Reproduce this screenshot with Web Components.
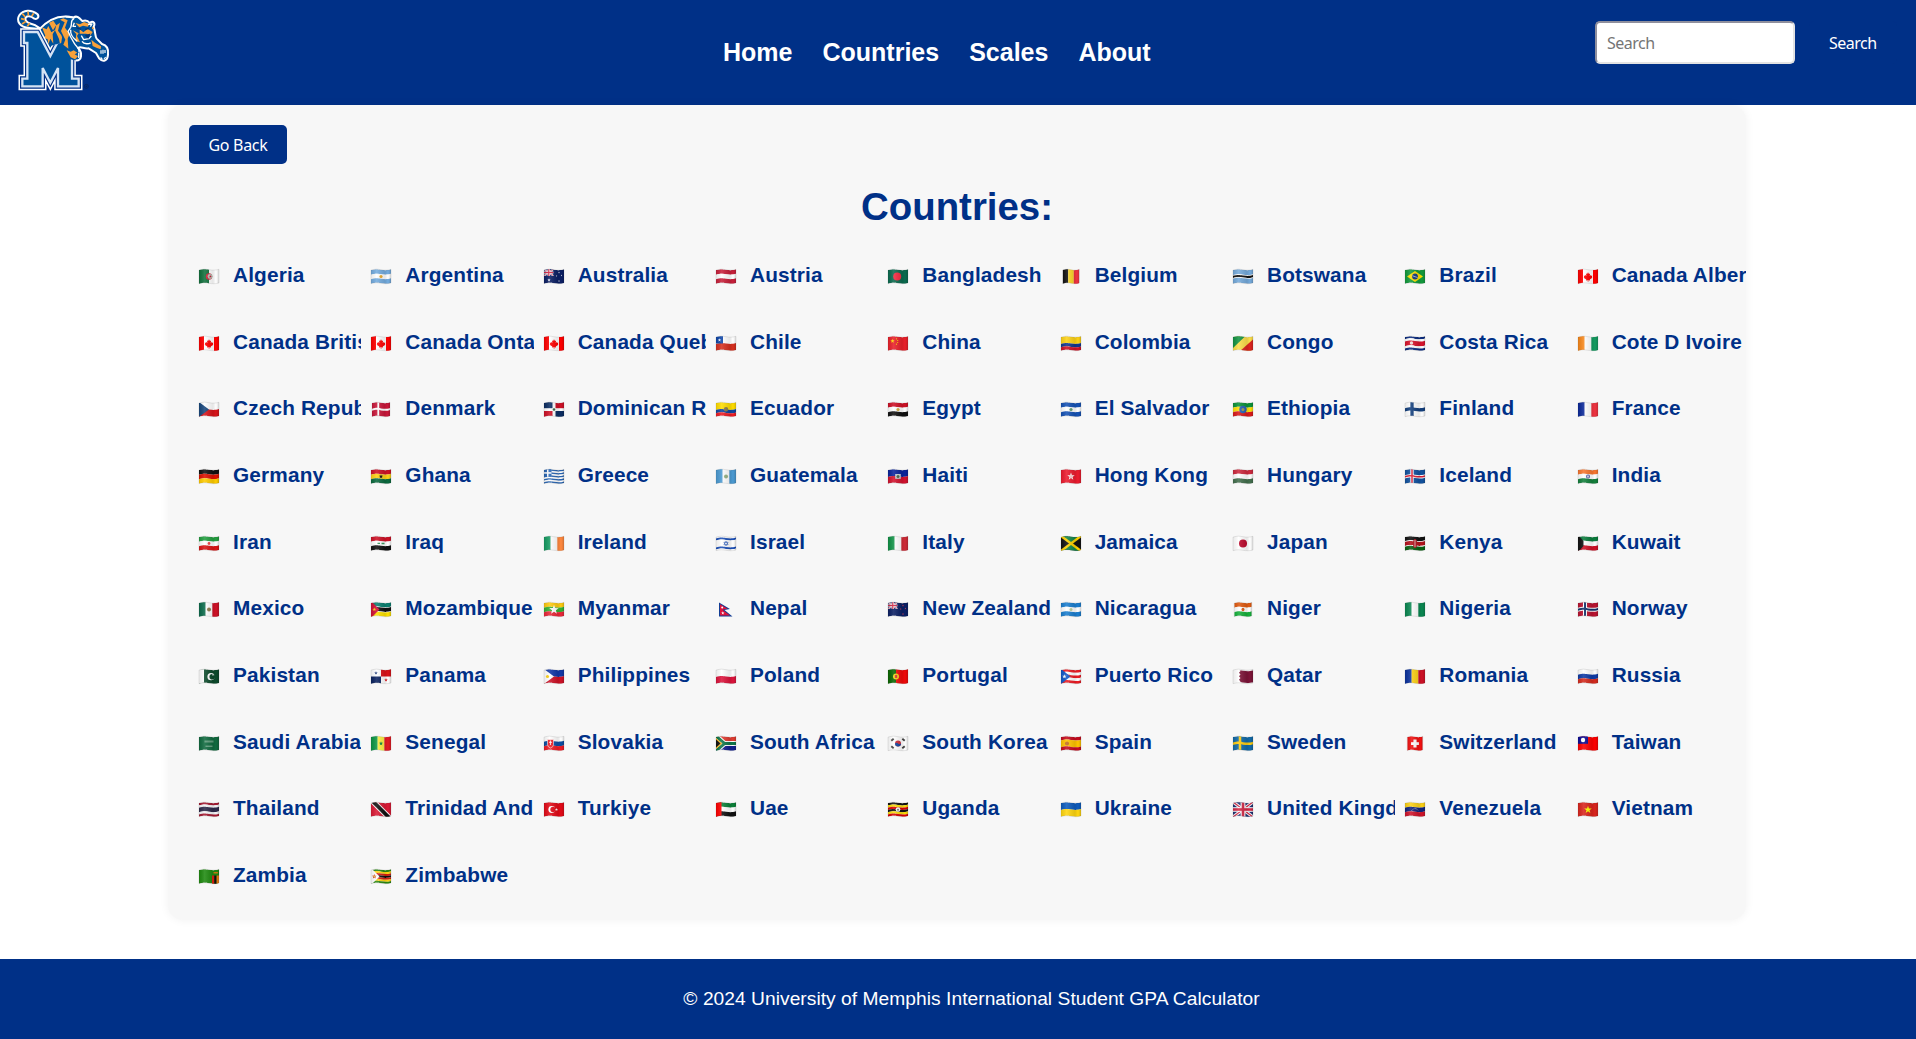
<!DOCTYPE html>
<html lang="en">
<head>
<meta charset="utf-8">
<title>Countries</title>
<style>
html, body { margin: 0; background: #fff; font-family: "Liberation Sans", Arial, sans-serif; }
</style>
</head>
<body>
<gpa-page></gpa-page>
<script>
const define = (name, html, init) => customElements.define(name, class extends HTMLElement {
  constructor() {
    super();
    this.attachShadow({ mode: 'open' }).innerHTML = html;
  }
  connectedCallback() { if (init) init.call(this, this.shadowRoot); }
});

/* ---------- flags: 20 x 15 drawings with a waving edge ---------- */
const band = (a, b, c) => `<path fill="${c}" d="M0 ${a + .4}C5 ${a - 1} 6 ${a - .6} 10 ${a}S16 ${a + .7} 20 ${a - .4}V${b - .4}C16 ${b + .7} 14 ${b + .6} 10 ${b}C6 ${b - .6} 5 ${b - 1} 0 ${b + .4}Z"/>`;
const T = .7, B = 14.3;
const H = (...cs) => {
  const ws = cs.map(c => Array.isArray(c) ? c[1] : 1), sum = ws.reduce((x, y) => x + y, 0);
  let y = T, out = '';
  cs.forEach((c, i) => { const n = y + (B - T) * ws[i] / sum; out += band(y, n, Array.isArray(c) ? c[0] : c); y = n; });
  return out;
};
const R = (x, y, w, h, c) => `<rect x="${x}" y="${y}" width="${w}" height="${h}" fill="${c}"/>`;
const V = (...cs) => {
  const ws = cs.map(c => Array.isArray(c) ? c[1] : 1), sum = ws.reduce((x, y) => x + y, 0);
  let x = 0, out = '';
  cs.forEach((c, i) => { const w = 20 * ws[i] / sum; out += R(x, -1, w + .02, 17, Array.isArray(c) ? c[0] : c); x += w; });
  return out;
};
const C = (x, y, r, c) => `<circle cx="${x}" cy="${y}" r="${r}" fill="${c}"/>`;
const P = (pts, c) => `<polygon points="${pts}" fill="${c}"/>`;
const L = (x1, y1, x2, y2, w, c) => `<line x1="${x1}" y1="${y1}" x2="${x2}" y2="${y2}" stroke="${c}" stroke-width="${w}"/>`;
const S = (x, y, r, c) => {
  let p = [];
  for (let i = 0; i < 10; i++) { const a = Math.PI * i / 5, q = i % 2 ? r * .4 : r; p.push((x + q * Math.sin(a)).toFixed(2) + ',' + (y - q * Math.cos(a)).toFixed(2)); }
  return P(p.join(' '), c);
};
const moon = (x, y, r, c, bg) => C(x, y, r, c) + C(x + r * .35, y, r * .78, bg);
const cross = (bg, c, w, c2, w2) => band(T, B, bg) + R(7 - w / 2, -1, w, 17, c) + band(7.4 - w / 2, 7.4 + w / 2, c) + (c2 ? R(7 - w2 / 2, -1, w2, 17, c2) + band(7.4 - w2 / 2, 7.4 + w2 / 2, c2) : '');
const jack = (w, h) => `<svg width="${w}" height="${h}" viewBox="0 0 20 15" preserveAspectRatio="none"><rect width="20" height="15" fill="#1b2f70"/>` +
  L(0, 0, 20, 15, 3.2, '#fff') + L(20, 0, 0, 15, 3.2, '#fff') + L(0, 0, 20, 15, 1.3, '#d22846') + L(20, 0, 0, 15, 1.3, '#d22846') +
  R(7.6, 0, 4.8, 15, '#fff') + R(0, 5.2, 20, 4.6, '#fff') + R(8.7, 0, 2.6, 15, '#d22846') + R(0, 6.2, 20, 2.6, '#d22846') + '</svg>';
const leaf = '<path fill="#f00" d="M10 3.2l1 1.8 1.1-.5-.4 2.4 1.2-1 .3.9 1.2-.1-.6 1.5.6.5-2.6 1.8.3 1-1.8-.2V13h-.5v-1.7l-1.8.2.3-1L5.6 8.700l.7-.5-.6-1.5 1.200.1.3-.9 1.200 1L8 4.500l1.100.5z"/>';
const canada = V(['#f00', 1], ['#fff', 2], ['#f00', 1]) + leaf;

const FLAGS = {
  dz: V('#11703c', '#fff') + moon(10, 7.5, 3.2, '#d2213a', '#b4c3b5') + S(11.4, 7.5, 1.4, '#d21034'),
  ar: H('#74acdf', '#fff', '#74acdf') + C(10, 7.5, 1.6, '#e6a82a'),
  au: band(T, B, '#0b1f64') + jack(9.6, 7) + S(5, 11, 1.7, '#fff') + S(15, 3.5, 1, '#fff') + S(15, 12, 1, '#fff') + S(12.6, 7, .9, '#fff') + S(17.5, 6.5, .9, '#fff'),
  at: H('#c8203a', '#fff', '#c8203a'),
  bd: band(T, B, '#0a6a4e') + C(9.2, 7.5, 4, '#f42a41'),
  be: V('#111', '#fbd526', '#ef3340'),
  bw: H(['#75aadb', 4], ['#fff', .6], ['#111', 1.7], ['#fff', .6], ['#75aadb', 4]),
  br: band(T, B, '#129a3c') + P('10,2 18,7.500 10,13 2,7.500', '#fedf00') + C(10, 7.5, 2.900, '#123a7c') + L(7.500, 6.800, 12.500, 8.500, .6, '#fff'),
  ca: canada,
  cl: H('#fff', '#d6301f') + R(0, -1, 7, 8.500, '#0e46a8') + S(3.500, 4, 1.8, '#fff'),
  cn: band(T, B, '#e9202a') + S(4.5, 5, 2.3, '#ffd400') + C(8.500, 2.800, .6, '#ffd400') + C(9.700, 4.500, .6, '#ffd400') + C(9.700, 6.500, .6, '#ffd400') + C(8.500, 8.200, .6, '#ffd400'),
  co: H(['#fcd116', 2], '#10378f', '#ce1126'),
  cg: band(T, B, '#fbde4a') + P('0,-1 13.500,-1 0,12', '#149443') + P('20,3.500 20,16 6,16', '#dc241f'),
  cr: H(['#0a2b7f', 1], ['#fff', 1], ['#d8142c', 2.2], ['#fff', 1], ['#0a2b7f', 1]) + C(6.500, 7, 1.7, '#f2d8d2'),
  ci: V('#f7871a', '#fff', '#149b60'),
  cz: H('#fff', '#d7141a') + P('0,0 10,7.500 0,15', '#18477d'),
  dk: cross('#c9173a', '#fff', 2),
  do: band(T, B, '#fff') + R(0, -1, 8.500, 7.200, '#0b2d62') + R(11.500, -1, 9, 7.200, '#ce1126') + R(0, 9, 8.500, 7, '#ce1126') + R(11.500, 9, 9, 7, '#0b2d62') + C(10, 7.500, 1.300, '#356544'),
  ec: H(['#fd0', 2], '#1045a0', '#ed1c24') + C(10, 7.200, 2.200, '#8a7a45'),
  eg: H('#ce1126', '#fff', '#111') + C(10, 7.500, 1.600, '#d1aa3f'),
  sv: H('#1552b5', '#fff', '#1552b5') + C(10, 7.500, 1.600, '#5c9b72'),
  et: H('#0b9339', '#fcdd09', '#da1a1b') + C(10, 7.500, 3.700, '#2461b5') + C(10, 7.500, 1.500, '#9a9a52'),
  fi: cross('#fff', '#133f7d', 3.300),
  fr: V('#0a2899', '#fff', '#ef3340'),
  de: H('#111', '#dd1200', '#fc0'),
  gh: H('#ce1126', '#fcd116', '#0b6b3f') + S(10, 7.500, 2.300, '#111'),
  gr: H('#2966b4', '#fff', '#2966b4', '#fff', '#2966b4', '#fff', '#2966b4', '#fff', '#2966b4') + R(0, -1, 7.500, 8.800, '#2966b4') + R(3, -1, 1.500, 8.800, '#fff') + R(0, 3.200, 7.500, 1.500, '#fff'),
  gt: V('#4b9ad2', '#fff', '#4b9ad2') + C(10, 7.500, 2, '#94b183'),
  ht: H('#0a249c', '#d2122e') + R(7.200, 5, 5.600, 4.800, '#c8cfd4') + C(10, 7.500, 1.500, '#49624b'),
  hk: band(T, B, '#ec1b2e') + S(10, 7.500, 3.900, '#fff') + C(10, 7.500, 1.500, '#f9c5c9'),
  hu: H('#cd2a3e', '#fff', '#436f4d'),
  is: cross('#12529f', '#fff', 3.300, '#dc1e35', 1.500),
  in: H('#f8772f', '#fff', '#13803c') + C(10, 7.500, 1.900, '#3a3f95') + C(10, 7.500, 1.200, '#c9cae6'),
  ir: H('#239f40', '#fff', '#da1414') + C(10, 7.500, 1.400, '#e44'),
  iq: H('#ce1126', '#fff', '#111') + L(6.500, 7.300, 9, 7.300, 1.300, '#3c9960') + L(10.500, 7.500, 13.500, 7.500, 1.300, '#3c9960'),
  ie: V('#169b62', '#fff', '#ff883e'),
  il: H(['#fff', 1.1], ['#1c50b8', 1.700], ['#fff', 6], ['#1c50b8', 1.700], ['#fff', 1.100]) + '<path d="M10 5.200l2.100 3.500H7.900zM10 9.800L7.900 6.300h4.200z" fill="none" stroke="#2458bb" stroke-width=".6"/>',
  it: V('#109246', '#fff', '#ce2b37'),
  jm: band(T, B, '#111') + P('0,-1 20,-1 10,7.500', '#12874a') + P('0,16 20,16 10,7.500', '#12874a') + L(0, 0, 20, 15, 2.400, '#fed100') + L(20, 0, 0, 15, 2.400, '#fed100'),
  jp: band(T, B, '#fff') + C(10, 7.500, 4, '#bc0a2d'),
  ke: H(['#111', 3], ['#fff', .6], ['#b5121c', 3], ['#fff', .6], ['#0a6013', 3]) + '<ellipse cx="10" cy="7.500" rx="2" ry="4.500" fill="#b5121c"/><path d="M10 4v7" stroke="#eee" stroke-width=".7"/>',
  kw: H('#0a7d3d', '#fff', '#ce1126') + P('0,-1 5.500,5 5.500,10 0,16', '#111'),
  mx: V('#0b6b4b', '#fff', '#ce1126') + C(10, 7.500, 2, '#8f7b4b'),
  mz: H(['#0a8070', 4], ['#fff', .5], ['#111', 3.700], ['#fff', .5], ['#fce100', 4]) + P('0,-1 8.500,7.500 0,16', '#d21034') + S(3.300, 7.500, 2, '#fcd116'),
  mm: H('#fecb10', '#34b233', '#ea2839') + S(10, 7.700, 5, '#fff'),
  np: P('3,.5 14,7 8.500,8 16.500,14.500 3,14.500', '#123d94') + P('4,2.200 11.500,6.800 6.500,7.800 14,13.500 4,13.500', '#dc143c') + C(6.200, 5.500, 1, '#fff') + S(6.800, 11, 1.700, '#fff'),
  nz: band(T, B, '#0b1f64') + jack(9.600, 7) + S(15, 3.500, 1.100, '#d2415a') + S(15, 12, 1.100, '#d2415a') + S(12.700, 7, 1, '#d2415a') + S(17.400, 6.500, 1, '#d2415a'),
  ni: H('#1b7fd0', '#fff', '#1b7fd0') + C(10, 7.500, 1.500, '#b9cf9b'),
  ne: H('#e05a10', '#fff', '#16b03b') + C(10, 7.500, 1.700, '#e05a10'),
  ng: V('#0a8751', '#fff', '#0a8751'),
  no: cross('#ba1330', '#fff', 4, '#123069', 2),
  pk: band(T, B, '#0c4a2b') + R(0, -1, 5, 17, '#fff') + moon(12, 7.700, 3.600, '#fff', '#0c4a2b') + S(14, 5.700, 1.300, '#fff'),
  pa: band(T, B, '#fff') + R(10, -1, 10, 8.500, '#da121a') + R(0, 7.500, 10, 9, '#0b2360') + S(5, 4, 1.900, '#1b3776') + S(15, 11, 1.900, '#da121a'),
  ph: H('#1238a8', '#ce1126') + P('0,0 10,7.500 0,15', '#fff') + C(3.500, 7.500, 1.600, '#fcd116'),
  pl: H('#fff', '#dc143c'),
  pt: V(['#0a6600', 2], ['#f00a0a', 3]) + C(8, 7.500, 3, '#f2d013') + R(6.900, 6, 2.300, 3, '#d43a34'),
  pr: H('#ed1c24', '#fff', '#ed1c24', '#fff', '#ed1c24') + P('0,0 9.500,7.500 0,15', '#1058c8') + S(3.400, 7.500, 2.300, '#fff'),
  qa: `<g transform="translate(0 1.200) scale(1 .86)">` + band(T, B, '#7d1438') + P('0,-1 6,-1 7.500,1 6,3 7.500,5 6,7 7.500,9 6,11 7.500,13 6,16 0,16', '#fff') + '</g>',
  ro: V('#0a319c', '#fcd116', '#ce1126'),
  ru: H('#fff', '#0f3ba6', '#d52b1e'),
  sa: band(T, B, '#106a3f') + L(5.500, 5.500, 14.500, 5.500, 2.200, '#5f9c7c') + L(6.500, 10.200, 13.500, 10.200, .8, '#a9cbb9'),
  sn: V('#0b9543', '#fdef42', '#e31b23') + S(10, 7.500, 2.200, '#0b853f'),
  sk: H('#fff', '#0b4ea2', '#ee1c25') + '<path d="M3.500 3.500h6V8.500q0 2.500-3 3.500-3-1-3-3.500z" fill="#ee1c25" stroke="#fff" stroke-width=".6"/>' + L(6.500, 4.500, 6.500, 9, .8, '#fff') + L(5, 6.300, 8, 6.300, .8, '#fff'),
  za: H('#e03c31', '#12208e') + '<path d="M0 0L8.500 7.500 0 15M8.500 7.500H20" fill="none" stroke="#fff" stroke-width="5"/><path d="M0 0L8.500 7.500 0 15M8.500 7.500H20" fill="none" stroke="#10774a" stroke-width="3"/>' + P('0,2 6.200,7.500 0,13', '#ffb81c') + P('0,3.600 4.500,7.500 0,11.400', '#111'),
  kr: band(T, B, '#fff') + C(10, 7.500, 3, '#cd2e3a') + '<path d="M7 7.500a3 3 0 0 0 6 0q-1.500 1.500-3 0t-3 0" fill="#1247a0"/>' + L(3.300, 4.700, 5.700, 2.700, 1.900, '#444') + L(14.300, 2.700, 16.700, 4.700, 1.900, '#444') + L(3.300, 10.300, 5.700, 12.300, 1.900, '#444') + L(14.300, 12.300, 16.700, 10.300, 1.900, '#444'),
  es: H('#c60b1e', ['#ffc400', 2], '#c60b1e') + C(6, 7.500, 2, '#c26b22'),
  se: cross('#126aa7', '#fecc10', 2.500),
  ch: band(T, B, '#f01010') + R(8, 3.500, 4, 8, '#fff') + R(5, 6.200, 10, 2.800, '#fff'),
  tw: band(T, B, '#fe0000') + R(0, -1, 10, 8.800, '#0b0b95') + C(5, 4, 2.200, '#fff'),
  th: H('#a51931', '#f4f5f8', ['#2d2a4a', 2], '#f4f5f8', '#a51931'),
  tt: band(T, B, '#da1a35') + L(1.500, -1, 18.500, 16, 5.600, '#fff') + L(1.500, -1, 18.500, 16, 3.800, '#111'),
  tr: band(T, B, '#e30a17') + moon(7.800, 7.500, 3.400, '#fff', '#e30a17') + S(12.500, 7.500, 1.600, '#fff'),
  ae: H('#0b8139', '#fff', '#111') + R(0, -1, 5.500, 17, '#fe0000'),
  ug: H('#111', '#fcdc04', '#d90000', '#111', '#fcdc04', '#d90000') + C(10, 7.500, 2.300, '#fff') + C(10, 7.700, 1, '#777'),
  ua: H('#0d5bbd', '#ffd610'),
  gb: jack(20, 15),
  ve: H('#fcd116', '#10247d', '#cf142b') + '<path d="M6.500 8.700Q10 4.500 13.500 8.700" fill="none" stroke="#c8cfe4" stroke-width=".8" stroke-dasharray=".8 .6"/>',
  vn: band(T, B, '#da251d') + S(10, 7.700, 4, '#ff0'),
  zm: band(T, B, '#1f8a10') + R(13, 6.500, 2.400, 9, '#de2010') + R(15.300, 6.500, 2.400, 9, '#111') + R(17.600, 6.500, 2.400, 9, '#ef7d10') + L(14.500, 3.700, 19, 3.700, 1.500, '#c77b12'),
  zw: H('#2b8a10', '#ffd210', '#d42010', '#111', '#d42010', '#ffd210', '#2b8a10') + P('0,-1 8.500,7.500 0,16', '#fff') + S(3.300, 7.500, 2.500, '#d42010') + C(3.300, 7.500, 1, '#e6c64c'),
};
const NARROW = { be: .84, dk: .9, ne: .88, ch: .78 };

define('country-flag', `
<style>:host{display:block;flex:none;width:20px;height:15px}svg{display:block;overflow:visible}svg svg{overflow:hidden}</style>
<div></div>`, function (root) {
  const k = this.getAttribute('code'), s = NARROW[k] || 1, nepal = k === 'np';
  const outline = 'M0 1.100C5 -.3 6 .1 10 .7S16 1.400 20 .3V13.900C16 15 14 14.900 10 14.300C6 13.700 5 13.300 0 14.700Z';
  root.querySelector('div').innerHTML = `<svg width="20" height="15" viewBox="0 0 20 15" aria-hidden="true">
    <defs><clipPath id="w"><path d="${outline}"/></clipPath>
    <linearGradient id="g"><stop offset="0" stop-opacity=".08"/><stop offset=".28" stop-color="#fff" stop-opacity=".12"/><stop offset=".7" stop-opacity=".1"/><stop offset=".85" stop-opacity="0"/><stop offset="1" stop-opacity=".15"/></linearGradient></defs>
    <g transform="translate(${10 - 10 * s} 0) scale(${s} 1)"><g ${nepal ? '' : 'clip-path="url(#w)"'}>${FLAGS[k]}</g>
    ${nepal ? '' : `<path d="${outline}" fill="url(#g)" stroke="#333" stroke-opacity=".22" stroke-width=".5"/>`}</g></svg>`;
});

define('country-item', `
<style>
:host{display:flex;box-sizing:border-box;height:40px;padding:0 0 0 10px;overflow:hidden;white-space:nowrap;align-items:center;
 color:#003087;font-weight:700;font-size:20.8px;line-height:24px;letter-spacing:.15px}
country-flag{margin:3px 14px 0 0}
</style><span><slot></slot></span>`, function (root) {
  const flag = document.createElement('country-flag');
  flag.setAttribute('code', this.getAttribute('code'));
  root.insertBefore(flag, root.querySelector('span'));
});

define('tiger-logo', `
<style>:host{display:block;width:130px;height:105px}svg{display:block}</style>
<svg width="130" height="105" viewBox="0 0 390 315" aria-hidden="true">
<defs><path id="m" d="M72 96H113L151 168L188 98H216V236H236V259H174V204L151 248L128 204V259H67V236H82V129H72Z"/></defs>
<path d="M88 84C58 82 48 62 58 46C69 29 94 27 112 42C120 51 111 59 103 56C91 46 77 47 76 57C76 66 89 71 104 75L125 88Z" fill="#00529b" stroke="#fff" stroke-width="6"/>
<path d="M63 56l12 3M67 41l9 10M84 35l1 12M101 40l-6 9M66 72l12-8M82 79l7-10" stroke="#f7a13a" stroke-width="5"/>
<path d="M116 90C146 56 184 43 222 53L215 140L160 175L116 120Z" fill="#00529b" stroke="#fff" stroke-width="6" stroke-linejoin="round"/>
<g fill="#f7a13a">
<path d="M126 82L136 107L131 113L143 118L145 133L151 116L160 131L158 102L166 89L154 97L145 78L140 88Z"/>
<path d="M147 68L159 91L169 75L165 91L177 117L181 137L190 122L184 106L174 92L180 68L169 76L160 62Z"/>
</g>
<clipPath id="mc"><path d="M40 70H118L150 138L186 128L206 150L260 150V290H40Z"/></clipPath>
<g clip-path="url(#mc)">
<use href="#m" fill="none" stroke="#fff" stroke-width="23"/>
<use href="#m" fill="none" stroke="#003087" stroke-width="14"/>
<use href="#m" fill="#00529b" stroke="#d5e3f4" stroke-width="7"/>
</g>
<path d="M196 51Q210 50 222 53C229 44 240 56 247 63C257 60 265 63 269 69C280 61 287 69 281 80C287 98 285 109 290 116L306 132C322 136 326 148 324 164C323 184 308 187 298 176L288 159L266 145C253 148 240 137 235 144C247 158 247 184 227 181C207 180 204 172 203 157C191 156 190 146 182 139Z" fill="#00529b"/>
<path d="M196 50Q210 50 222 53C229 44 240 56 247 63C257 60 265 63 269 69C280 61 287 69 281 80C287 98 285 109 290 116L306 132C322 136 326 148 324 164C323 184 308 187 298 176L288 159L266 145C253 148 240 137 235 144C247 158 247 184 227 181" fill="none" stroke="#fff" stroke-width="6" stroke-linejoin="round"/>
<g fill="#f7a13a">
<path d="M180 59L194 67L183 93L196 119L190 134L205 146L203 116L209 101L195 83L203 61L190 55Z"/>
<path d="M200 151L212 155L221 151L232 158L224 163L234 169L225 178L212 172Z"/>
<path d="M226 69L240 73L252 66L269 72L263 80L249 77L238 82ZM239 88L250 97L263 87L278 96L272 105L258 101L239 101ZM218 91L229 102L226 123L240 127L231 108L236 100ZM274 119L285 128L303 139L302 148L291 144L278 138ZM277 79L283 86L276 88Z"/>
</g>
<path d="M222 56C209 62 218 70 212 82L204 94L212 111L223 130C230 142 239 144 237 157M212 89C210 106 225 119 232 124M244 107L251 119L267 116L274 108M246 124C253 134 267 132 272 128M264 73L276 72L271 80M223 68L219 79L228 79" fill="none" stroke="#fff" stroke-width="4" stroke-linejoin="round"/>
<path d="M229 83l14 5M255 88l12-3M258 107l10-3-4 9z" stroke="#073570" stroke-width="4" fill="#073570"/>
<path d="M303 151v10M309 149v12M315 150v9M302 172l5 6M312 177l5-6M236 158v16M241 160v12" stroke="#fff" stroke-width="3.500"/>
<circle cx="259" cy="259" r="6" fill="none" stroke="#08245a" stroke-width="2.500"/><circle cx="259" cy="259" r="2.500" fill="#08245a"/>
</svg>`);

define('site-header', `
<style>
:host{display:grid;grid-template-columns:723px 1fr 321px;height:105px;background:#003087;color:#fff}
nav{display:flex;gap:30px;padding-top:37px;font-weight:700;font-size:25px;line-height:30px}
form{display:flex;align-items:flex-start;margin:0;padding-top:21px}
input,button{font-family:"Noto Sans",sans-serif;font-size:16px;letter-spacing:-.5px;box-sizing:border-box;height:43px;border-radius:5px}
input{width:200px;border:2px solid;border-color:#8f8f9d #e3e3e3 #e3e3e3 #8f8f9d;padding:0 10px;background:#fff}
input::placeholder{color:#757575}
button{margin-left:14px;padding:0 20px;border:0;background:#003087;color:#fff}
</style>
<tiger-logo></tiger-logo>
<nav><span>Home</span><span>Countries</span><span>Scales</span><span>About</span></nav>
<form><input placeholder="Search"><button type="button">Search</button></form>`);

define('site-footer', `
<style>:host{display:flex;justify-content:center;align-items:center;box-sizing:border-box;height:80px;padding:0 0 0 27px;background:#003087;color:#fff;font-size:19.2px;line-height:22px;letter-spacing:.04px}</style>
<span>© 2024 University of Memphis International Student GPA Calculator</span>`);

const COUNTRIES = `dz Algeria|ar Argentina|au Australia|at Austria|bd Bangladesh|be Belgium|bw Botswana|br Brazil|ca Canada Alberta|ca Canada British Columbia|ca Canada Ontario|ca Canada Quebec|cl Chile|cn China|co Colombia|cg Congo|cr Costa Rica|ci Cote D Ivoire|cz Czech Republic|dk Denmark|do Dominican Republic|ec Ecuador|eg Egypt|sv El Salvador|et Ethiopia|fi Finland|fr France|de Germany|gh Ghana|gr Greece|gt Guatemala|ht Haiti|hk Hong Kong|hu Hungary|is Iceland|in India|ir Iran|iq Iraq|ie Ireland|il Israel|it Italy|jm Jamaica|jp Japan|ke Kenya|kw Kuwait|mx Mexico|mz Mozambique|mm Myanmar|np Nepal|nz New Zealand|ni Nicaragua|ne Niger|ng Nigeria|no Norway|pk Pakistan|pa Panama|ph Philippines|pl Poland|pt Portugal|pr Puerto Rico|qa Qatar|ro Romania|ru Russia|sa Saudi Arabia|sn Senegal|sk Slovakia|za South Africa|kr South Korea|es Spain|se Sweden|ch Switzerland|tw Taiwan|th Thailand|tt Trinidad And Tobago|tr Turkiye|ae Uae|ug Uganda|ua Ukraine|gb United Kingdom|ve Venezuela|vn Vietnam|zm Zambia|zw Zimbabwe`.split('|');

define('country-panel', `
<style>
:host{display:block;box-sizing:border-box;width:1578px;height:815px;margin:0 0 0 168px;padding:20px 0 0 21px;overflow:hidden;
 background:#f7f7f7;border-radius:15px;box-shadow:0 0 10px rgba(0,0,0,.06);color:#003087}
button{display:block;width:98px;height:39px;padding:0;border:0;border-radius:5px;background:#003087;color:#fff;font:16px "Noto Sans",sans-serif;letter-spacing:-.3px}
h1{margin:21px 21px 0 0;text-align:center;font-size:38.4px;line-height:44px}
.grid{display:grid;grid-template-columns:repeat(9,172.33px);row-gap:26.667px;margin-top:26px}
country-item:nth-child(9n){margin-right:-6px}
</style>
<button type="button">Go Back</button>
<h1>Countries:</h1>
<div class="grid"></div>`, function (root) {
  root.querySelector('.grid').innerHTML = COUNTRIES.map(c => `<country-item code="${c.slice(0, 2)}">${c.slice(3)}</country-item>`).join('');
});

define('gpa-page', `
<style>:host{display:flex;flex-direction:column;height:1039px;overflow:hidden}site-footer{margin-top:auto}</style>
<site-header></site-header><country-panel></country-panel><site-footer></site-footer>`);
</script>
</body>
</html>
